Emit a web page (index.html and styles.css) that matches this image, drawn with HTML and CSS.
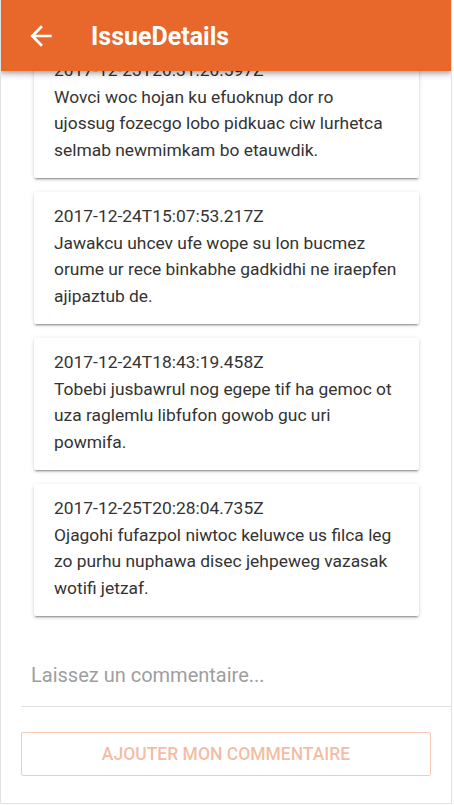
FILE: index.html
```html
<!DOCTYPE html>
<html lang="fr">
<head>
<meta charset="utf-8">
<title>IssueDetails</title>
<link rel="stylesheet" href="styles.css">
</head>
<body>
<div class="app">
  <header class="appbar">
    <svg class="back" viewBox="0 0 24 24" width="32" height="32" aria-hidden="true"><path d="M20 11H7.83l5.59-5.59L12 4l-8 8 8 8 1.41-1.41L7.83 13H20v-2z" fill="#fff"/></svg>
    <h1 class="title">IssueDetails</h1>
  </header>
  <main class="list">
    <div class="card">
      <div class="line">2017-12-23T20:31:20.597Z</div>
      <div class="line">Wovci woc hojan ku efuoknup dor ro<br>ujossug fozecgo lobo pidkuac ciw lurhetca selmab newmimkam bo etauwdik.</div>
    </div>
    <div class="card">
      <div class="line">2017-12-24T15:07:53.217Z</div>
      <div class="line">Jawakcu uhcev ufe wope su lon bucmez orume ur rece binkabhe gadkidhi ne iraepfen ajipaztub de.</div>
    </div>
    <div class="card">
      <div class="line">2017-12-24T18:43:19.458Z</div>
      <div class="line">Tobebi jusbawrul nog egepe tif ha gemoc ot uza raglemlu libfufon gowob guc uri powmifa.</div>
    </div>
    <div class="card">
      <div class="line">2017-12-25T20:28:04.735Z</div>
      <div class="line">Ojagohi fufazpol niwtoc keluwce us filca leg zo purhu nuphawa disec jehpeweg vazasak wotifi jetzaf.</div>
    </div>
  </main>
  <div class="field"><span class="placeholder">Laissez un commentaire...</span></div>
  <div class="actions"><div class="btn">Ajouter mon commentaire</div></div>
</div>
</body>
</html>
```
FILE: styles.css
```css
* { box-sizing: border-box; }
html, body { margin: 0; padding: 0; background: #fff; }
body { font-family: Roboto, "Noto Sans", sans-serif; }
.app {
  width: 452px;
  height: 804px;
  border: 1px solid #e2e2e2;
  border-top: none;
  display: flex;
  flex-direction: column;
  overflow: hidden;
}
.appbar {
  height: 71px;
  flex: none;
  margin: 0 -1px;
  background: #e8672a;
  display: flex;
  align-items: center;
  padding-left: 25px;
  box-shadow: 0 2px 4px -1px rgba(0,0,0,0.2), 0 4px 5px 0 rgba(0,0,0,0.14), 0 1px 10px 0 rgba(0,0,0,0.12);
  position: relative;
  z-index: 2;
}
.back { display: block; flex: none; }
.title {
  margin: 2px 0 0 34px;
  color: #fff;
  font-size: 25px;
  font-weight: 700;
  line-height: 1;
}
.list {
  flex: 1;
  min-height: 0;
  overflow: hidden;
  display: flex;
  flex-direction: column;
  justify-content: flex-end;
  gap: 14px;
  padding: 0 0 22px 33px;
}
.card {
  flex: none;
  width: 385px;
  background: #fff;
  border-radius: 2px;
  padding: 11px 20px 15px;
  color: #333;
  font-size: 17.4px;
  line-height: 26.5px;
  box-shadow: 0 3px 1px -2px rgba(0,0,0,0.2), 0 2px 2px 0 rgba(0,0,0,0.14), 0 1px 5px 0 rgba(0,0,0,0.12);
}
.field {
  flex: none;
  margin-left: 20px;
  padding: 26px 10px 18px;
  border-bottom: 1px solid #e0e0e0;
  line-height: 22px;
}
.placeholder { color: #9e9e9e; font-size: 20px; }
.actions { flex: none; padding: 25px 20px 27px 20px; }
.btn {
  height: 44px;
  width: 410px;
  border: 1px solid rgba(233,103,42,0.35);
  border-radius: 2px;
  display: flex;
  align-items: center;
  justify-content: center;
  text-transform: uppercase;
  color: rgba(233,103,42,0.45);
  font-size: 17.5px;
  font-weight: 500;
}
```
